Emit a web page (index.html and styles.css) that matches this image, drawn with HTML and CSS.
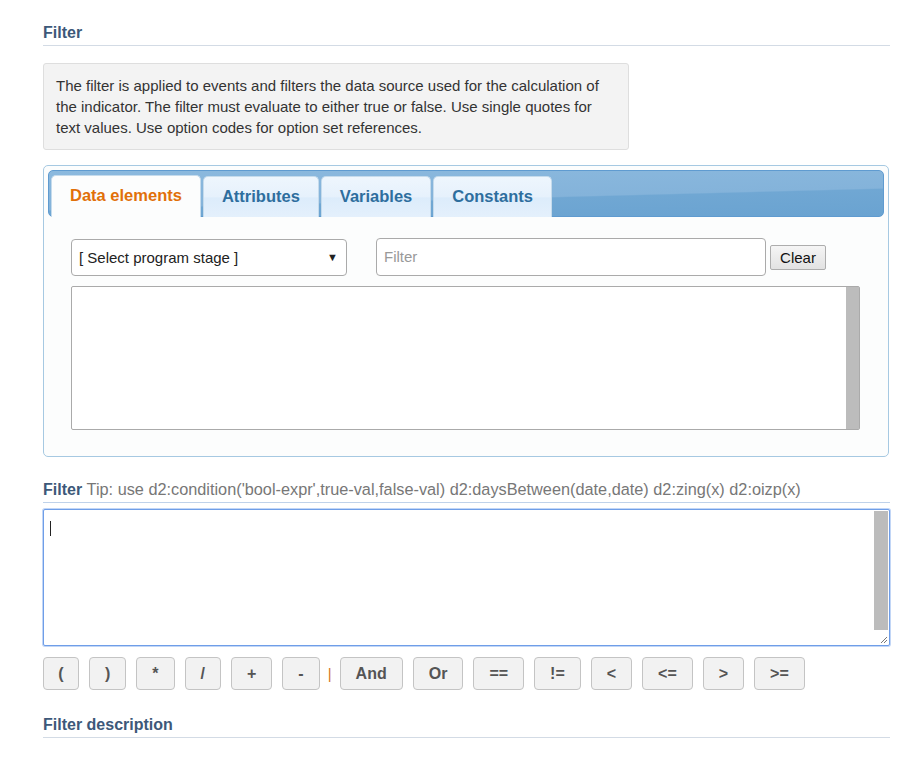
FILE: index.html
```html
<!DOCTYPE html>
<html>
<head>
<meta charset="utf-8">
<link rel="stylesheet" href="styles.css">
</head>
<body>
<div class="page">
  <h3 class="section-title">Filter</h3>
  <div class="info-box">The filter is applied to events and filters the data source used for the calculation of the indicator. The filter must evaluate to either true or false. Use single quotes for text values. Use option codes for option set references.</div>

  <div class="tabs">
    <ul class="tab-nav">
      <li class="tab active">Data elements</li>
      <li class="tab">Attributes</li>
      <li class="tab">Variables</li>
      <li class="tab">Constants</li>
    </ul>
    <div class="tab-panel">
      <div class="controls">
        <div class="select"><span>[ Select program stage ]</span><span class="arrow">▼</span></div>
        <div class="filter-input">Filter</div>
        <button class="clear-btn">Clear</button>
      </div>
      <div class="listbox">
        <div class="list-area"></div>
        <div class="scrollbar"></div>
      </div>
    </div>
  </div>

  <div class="filter-label"><b>Filter</b> <span class="tip">Tip: use d2:condition('bool-expr',true-val,false-val) d2:daysBetween(date,date) d2:zing(x) d2:oizp(x)</span></div>

  <div class="textarea">
    <div class="text-area-inner"><span class="caret"></span></div>
    <div class="ta-side">
      <div class="ta-scroll"></div>
      <div class="ta-resize">
        <svg width="10" height="10" viewBox="0 0 10 10"><path d="M9 3 L3 9 M9 6 L6 9" stroke="#777" stroke-width="1" fill="none"/></svg>
      </div>
    </div>
  </div>

  <div class="ops">
    <button class="op">(</button>
    <button class="op">)</button>
    <button class="op">*</button>
    <button class="op">/</button>
    <button class="op">+</button>
    <button class="op">-</button>
    <span class="sep">|</span>
    <button class="op">And</button>
    <button class="op">Or</button>
    <button class="op">==</button>
    <button class="op">!=</button>
    <button class="op">&lt;</button>
    <button class="op">&lt;=</button>
    <button class="op">&gt;</button>
    <button class="op">&gt;=</button>
  </div>

  <h3 class="section-title desc">Filter description</h3>
</div>
</body>
</html>
```

FILE: styles.css
```css
* { box-sizing: border-box; }
html, body { margin: 0; padding: 0; background: #fff; }
body { font-family: "Liberation Sans", Arial, sans-serif; color: #333; }
.page { padding-left: 43px; width: 890px; }

.section-title {
  margin: 0;
  padding: 23px 0 2px 0;
  font-size: 16px;
  line-height: 20px;
  font-weight: bold;
  color: #3d5879;
  border-bottom: 1px solid #d3dbe5;
}
.section-title.desc { margin-top: 2px; }

.info-box {
  margin-top: 17px;
  width: 586px;
  padding: 11px 12px;
  background: #f3f3f3;
  border: 1px solid #dedede;
  border-radius: 3px;
  font-size: 15px;
  line-height: 21px;
  color: #333;
}

.tabs {
  margin-top: 15px;
  width: 846px;
  height: 292px;
  border: 1px solid #a6c9e2;
  border-radius: 5px;
  padding: 4px;
  background: #fcfdfd;
}
.tab-nav {
  list-style: none;
  margin: 0;
  padding: 5px 2px 0 2px;
  height: 47px;
  display: flex;
  gap: 2px;
  align-items: flex-end;
  border: 1px solid #5f9bd0;
  border-radius: 5px;
  background: linear-gradient(178.5deg, #8bb9de 0%, #84b3da 58%, #70a7d3 60%, #6aa3d1 100%);
}
.tab {
  height: 41px;
  margin-bottom: -1px;
  padding: 0 18px;
  font-size: 16.5px;
  font-weight: bold;
  line-height: 39px;
  color: #2e6e9e;
  border: 1px solid #c5dbec;
  border-bottom: none;
  border-radius: 5px 5px 0 0;
  background: linear-gradient(#eef6fd 0%, #e6f1fc 50%, #dcecfb 52%, #e4f0fc 100%);
}
.tab.active {
  color: #e17009;
  background: #fcfdfd;
  border-color: #c5dbec;
  height: 42px;
}
.tab-panel { padding: 21px 20px 0 23px; }
.controls { display: flex; align-items: center; }
.select {
  width: 276px;
  height: 37px;
  border: 1px solid #aaa;
  border-radius: 4px;
  background: #fff;
  display: flex;
  align-items: center;
  justify-content: space-between;
  padding: 0 8px 0 7px;
  font-size: 15px;
  color: #222;
}
.select .arrow { font-size: 11px; color: #222; }
.filter-input {
  margin-left: 29px;
  width: 390px;
  height: 38px;
  border: 1px solid #aaa;
  border-radius: 4px;
  background: #fff;
  padding: 0 7px;
  line-height: 36px;
  font-size: 15px;
  color: #999;
}
.clear-btn {
  margin-left: 4px;
  width: 56px;
  height: 25px;
  border: 1px solid #adadad;
  border-radius: 2px;
  background: linear-gradient(#f5f5f5, #e2e2e2);
  font-family: "Liberation Sans", Arial, sans-serif;
  font-size: 15px;
  color: #111;
  padding: 0;
}
.listbox {
  margin-top: 10px;
  width: 789px;
  height: 144px;
  border: 1px solid #aaa;
  border-radius: 2px;
  background: #fff;
  display: flex;
}
.list-area { flex: 1; }
.scrollbar { width: 13px; background: #bcbcbc; }

.filter-label {
  margin-top: 22px;
  padding-bottom: 2px;
  font-size: 16px;
  line-height: 20px;
  color: #777;
  border-bottom: 1px solid #bfd2ea;
  width: 847px;
  white-space: nowrap;
}
.filter-label b { color: #3d5879; }
.filter-label .tip { font-size: 16.3px; }

.textarea {
  margin-top: 6px;
  width: 847px;
  height: 137px;
  border: 1px solid #6f9ee8;
  box-shadow: 0 0 0 1px rgba(120, 165, 235, 0.45);
  border-radius: 2px;
  background: #fff;
  display: flex;
  padding: 1px 1px 1px 0;
}
.text-area-inner { flex: 1; padding: 10px 0 0 6px; }
.caret { display: block; width: 1px; height: 15px; background: #222; }
.ta-side { width: 14px; display: flex; flex-direction: column; }
.ta-scroll { flex: 1; background: #bcbcbc; }
.ta-resize { height: 14px; background: #fff; display: flex; align-items: flex-end; justify-content: flex-end; }
.ta-resize svg { display: block; }

.ops { margin-top: 11px; display: flex; align-items: center; gap: 10px; }
.op {
  height: 33px;
  padding: 0 15px;
  min-width: 36px;
  border: 1px solid #c4c4c4;
  border-radius: 4px;
  background: #f2f2f2;
  font-family: "Liberation Sans", Arial, sans-serif;
  font-size: 16px;
  font-weight: bold;
  color: #555;
}
.op:first-child { padding: 0 14px; }
.sep { color: #d5761e; font-size: 15px; margin: 0 -2px; }
```
